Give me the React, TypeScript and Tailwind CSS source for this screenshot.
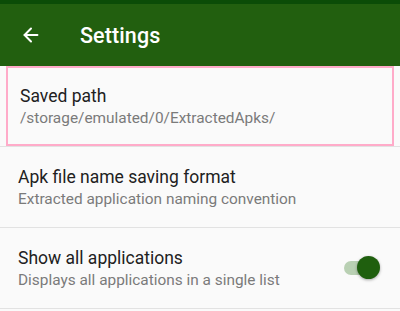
import { ArrowLeft } from "lucide-react";

type Row = { title: string; summary: string; toggle?: boolean; focused?: boolean };

const ROWS: Row[] = [
  { title: "Saved path", summary: "/storage/emulated/0/ExtractedApks/", focused: true },
  { title: "Apk file name saving format", summary: "Extracted application naming convention" },
  { title: "Show all applications", summary: "Displays all applications in a single list", toggle: true },
];

function Switch() {
  return (
    <div className="relative w-[36px] h-[24px] flex items-center shrink-0">
      <div className="w-[32px] h-[14px] rounded-full bg-[#b9d0b3]" />
      <div className="absolute right-0 top-0 w-[23px] h-[23px] rounded-full bg-[#1f5f0e] shadow-[0_1px_3px_rgba(0,0,0,0.35)]" />
    </div>
  );
}

export default function App() {
  return (
    <div className="w-[400px] h-[311px] bg-[#fafafa] overflow-hidden" style={{ fontFamily: "Roboto, 'Noto Sans', sans-serif" }}>
      <div className="h-[4px] bg-[#0b4c07]" />
      <div className="h-[62px] bg-[#225f0f] flex items-center text-white">
        <ArrowLeft className="w-[22px] h-[22px] ml-[20px]" strokeWidth={2.2} />
        <span className="ml-[38px] mt-[2px] text-[21.5px] font-medium tracking-[0.1px]">Settings</span>
      </div>
      {ROWS.map((row) => (
        <div key={row.title} className="border-b border-[#e2e2e2]">
          <div
            className={
              row.focused
                ? "mx-[6px] h-[80px] border-2 border-[#ffabc9] flex items-center pl-[12px] pr-[14px]"
                : "h-[80px] flex items-center pl-[18px] pr-[20px]"
            }
          >
            <div className="flex-1 flex flex-col">
              <span className="text-[17.5px] leading-[24px] text-[#212121]">{row.title}</span>
              <span className="text-[15.4px] leading-[20px] text-[#7a7a7a]">{row.summary}</span>
            </div>
            {row.toggle && <Switch />}
          </div>
        </div>
      ))}
    </div>
  );
}
